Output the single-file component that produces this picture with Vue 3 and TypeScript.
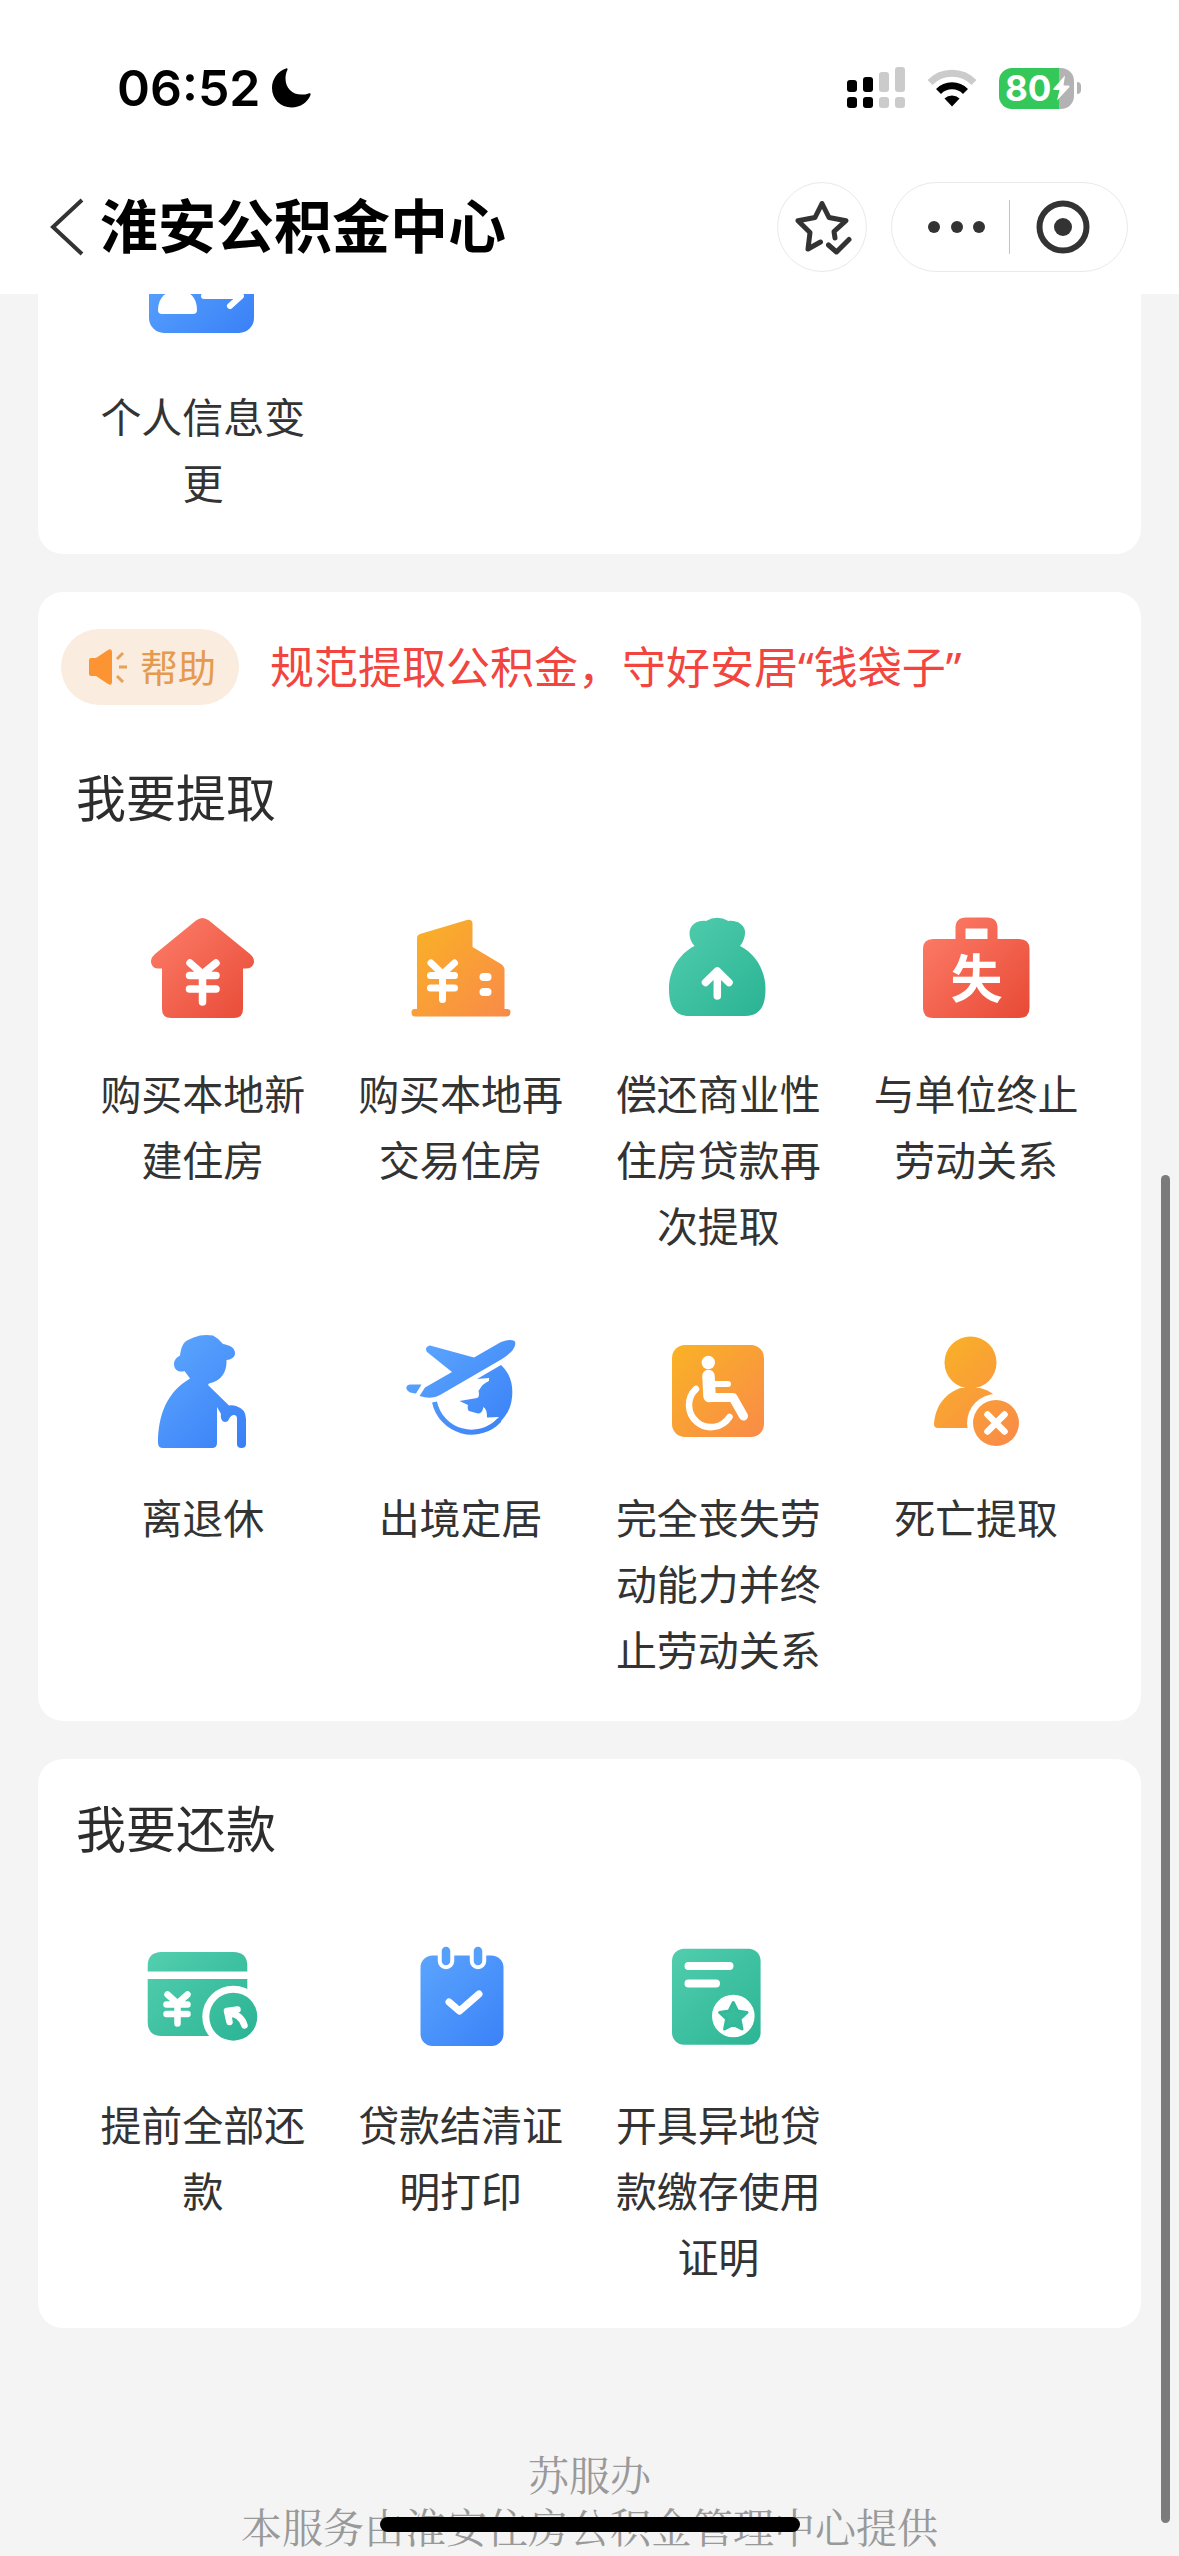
<script setup lang="ts">
type IconName =
  | 'profile' | 'house' | 'building' | 'bag' | 'briefcase' | 'elder'
  | 'plane' | 'wheelchair' | 'person' | 'repay' | 'calendar' | 'certificate'

interface Service {
  label: string
  icon: IconName
}

interface Section {
  id: string
  title?: string
  notice?: string
  items: Service[]
}

const sections: Section[] = [
  {
    id: 'info',
    items: [{ label: '个人信息变更', icon: 'profile' }],
  },
  {
    id: 'withdraw',
    title: '我要提取',
    notice: '规范提取公积金，守好安居“钱袋子”',
    items: [
      { label: '购买本地新建住房', icon: 'house' },
      { label: '购买本地再交易住房', icon: 'building' },
      { label: '偿还商业性住房贷款再次提取', icon: 'bag' },
      { label: '与单位终止劳动关系', icon: 'briefcase' },
      { label: '离退休', icon: 'elder' },
      { label: '出境定居', icon: 'plane' },
      { label: '完全丧失劳动能力并终止劳动关系', icon: 'wheelchair' },
      { label: '死亡提取', icon: 'person' },
    ],
  },
  {
    id: 'repay',
    title: '我要还款',
    items: [
      { label: '提前全部还款', icon: 'repay' },
      { label: '贷款结清证明打印', icon: 'calendar' },
      { label: '开具异地贷款缴存使用证明', icon: 'certificate' },
    ],
  },
]

const gradients = [
  { id: 'g-red', from: '#fc7b66', to: '#e94d39' },
  { id: 'g-orange', from: '#f9b226', to: '#f98b48' },
  { id: 'g-green', from: '#50cdad', to: '#2bb494' },
  { id: 'g-blue', from: '#5ca6fe', to: '#3a81f7' },
]
</script>

<template>
  <div class="page">
    <svg class="defs" aria-hidden="true">
      <defs>
        <linearGradient
          v-for="g in gradients"
          :id="g.id"
          :key="g.id"
          gradientUnits="userSpaceOnUse"
          x1="12" y1="12" x2="102" y2="102"
        >
          <stop offset="0" :stop-color="g.from" />
          <stop offset="1" :stop-color="g.to" />
        </linearGradient>
      </defs>
    </svg>

    <header class="header">
      <div class="status">
        <div class="clock">
          <time>06:52</time>
          <svg width="40" height="40" viewBox="0 0 40 40" aria-hidden="true">
            <path d="M15 0.5C6.500 3.500 1 11 1 20C1 31 9.500 39.500 20.500 39.500C29.500 39.500 36.500 34.500 39.500 27C40 25.500 39 24.800 37.500 25.400C35.500 26.200 33 26.600 30.500 26.600C21 26.600 14.500 20 14.500 10.500C14.500 7.500 15.200 4.500 16.300 2.300C17 0.900 16.300 0 15 0.500Z" />
          </svg>
        </div>
        <div class="indicators">
          <svg width="58" height="42" viewBox="0 0 58 42" aria-hidden="true">
            <rect x="0" y="13" width="10" height="12" rx="3" />
            <rect x="16" y="10" width="10" height="15" rx="3" />
            <rect x="0" y="30" width="10" height="11" rx="3" />
            <rect x="16" y="30" width="10" height="11" rx="3" />
            <g fill="#cbcbcb">
              <rect x="32" y="5" width="10" height="20" rx="3" />
              <rect x="48" y="0" width="10" height="25" rx="3" />
              <rect x="32" y="30" width="10" height="11" rx="3" />
              <rect x="48" y="30" width="10" height="11" rx="3" />
            </g>
          </svg>
          <svg width="50" height="38" viewBox="0 0 50 38" aria-hidden="true">
            <path d="M3 13.500A31 31 0 0 1 47 13.500" fill="none" stroke="#cbcbcb" stroke-width="7" />
            <path d="M11.500 22.500A19 19 0 0 1 38.500 22.500" fill="none" stroke="#000" stroke-width="7" />
            <path d="M17.500 29.500A11 11 0 0 1 32.500 29.500L25 37.500Z" />
          </svg>
          <div class="battery">
            <span class="battery-body">
              <span class="battery-text">80</span>
              <svg width="17" height="26" viewBox="0 0 17 26" aria-hidden="true">
                <path d="M12 0.500L0.500 13.500Q0 15 1.500 15H6.500L4 25.500L16.500 12Q17 10.500 15.500 10.500H10.500Z" fill="#fff" />
              </svg>
            </span>
            <span class="battery-cap"></span>
          </div>
        </div>
      </div>

      <nav class="nav">
        <button class="back" type="button" aria-label="返回">
          <svg width="34" height="58" viewBox="0 0 34 58" aria-hidden="true">
            <path d="M32 2L3 29L32 56" fill="none" stroke="#333" stroke-width="4" />
          </svg>
        </button>
        <h1>淮安公积金中心</h1>
        <button class="favorite" type="button" aria-label="收藏">
          <svg width="60" height="60" viewBox="-2 -2 60 60" aria-hidden="true">
            <g fill="none" stroke="#333" stroke-width="5" stroke-linecap="round" stroke-linejoin="round">
              <path d="M41 39L40 32.500L52 21.700L35 18.500L28 4.500L21 18.500L4 21.700L16 33.500L14 50L26.500 43" />
              <path d="M34.500 46L42.500 53L55 40.500" />
            </g>
          </svg>
        </button>
        <div class="capsule">
          <button class="more" type="button" aria-label="更多">
            <svg width="58" height="12" viewBox="0 0 58 12" aria-hidden="true">
              <g fill="#333">
                <circle cx="6" cy="6" r="6" />
                <circle cx="29" cy="6" r="6" />
                <circle cx="51" cy="6" r="6" />
              </g>
            </svg>
          </button>
          <span class="divider"></span>
          <button class="close" type="button" aria-label="关闭">
            <svg width="54" height="54" viewBox="0 0 54 54" aria-hidden="true">
              <circle cx="27" cy="27" r="23.500" fill="none" stroke="#333" stroke-width="6" />
              <circle cx="27" cy="27" r="9" fill="#333" />
            </svg>
          </button>
        </div>
      </nav>
    </header>

    <main class="content">
      <section v-for="section in sections" :key="section.id" class="card">
        <div v-if="section.notice" class="notice">
          <a class="help" href="#help">
            <svg width="40" height="36" viewBox="0 0 40 36" aria-hidden="true">
              <path d="M1 11Q1 9 3 9H8L20 1Q24 -1 24 3V33Q24 37 20 35L8 27H3Q1 27 1 25Z" fill="#fc9433" />
              <path d="M29 10L35 4M31 18H39M29 27L35 33" stroke="#e9a057" stroke-width="3" />
            </svg>
            <span>帮助</span>
          </a>
          <a class="notice-text" href="#notice">{{ section.notice }}</a>
        </div>
        <h2 v-if="section.title">{{ section.title }}</h2>
        <div class="grid">
          <button v-for="item in section.items" :key="item.label" class="item" type="button">
            <svg class="icon" viewBox="0 0 114 114" aria-hidden="true">
              <template v-if="item.icon === 'profile'">
                <rect x="3" y="14" width="105" height="85" rx="15" fill="url(#g-blue)" />
                <circle cx="32" cy="44" r="12" fill="#fff" />
                <path d="M12 76C12 64 20 56 32 56S51 64 51 76Q51 80 47 80H16Q12 80 12 76Z" fill="#fff" />
                <path d="M58 62H95L84 72" fill="none" stroke="#fff" stroke-width="6" stroke-linecap="round" stroke-linejoin="round" />
                <path d="M95 47H58L68 38" fill="none" stroke="#fff" stroke-width="6" stroke-linecap="round" stroke-linejoin="round" />
              </template>

              <template v-else-if="item.icon === 'house'">
                <path d="M50 9.500Q56.500 4.500 63 9.500L104 43Q109.500 48 107.500 53Q105.500 57.500 100 57.500H97V98Q97 107 88 107H25Q16 107 16 98V57.500H12.500Q7 57.500 5.500 53Q3.500 48 9 43Z" fill="url(#g-red)" />
                <path d="M44 52L56.500 63L70 52M43.500 64.500H70M43.500 78H70M56.500 63V91" fill="none" stroke="#fff" stroke-width="7.500" stroke-linecap="round" />
              </template>

              <template v-else-if="item.icon === 'building'">
                <path d="M13 27Q13 24 16 23L63 9Q68.500 8 68.500 13V36L97 53Q100.500 55.500 100.500 59V98H103Q106.500 98 106.500 101.500T103 105.500H11Q7.500 105.500 7.500 101.500T11 98H13Z" fill="url(#g-orange)" />
                <path d="M27 52L38.500 63L50.500 52M26.500 64.500H50.500M26.500 77H50.500M38.500 63V88.500" fill="none" stroke="#fff" stroke-width="7" stroke-linecap="round" />
                <rect x="75.500" y="62" width="12" height="8" rx="4" fill="#fff" />
                <rect x="75.500" y="77" width="12" height="8" rx="4" fill="#fff" />
              </template>

              <template v-else-if="item.icon === 'bag'">
                <path d="M33.500 35C29 30 28 24 28.700 20C30 13 37 9 45 10Q56 3.500 67.500 10C75 9 83 13 84 20C84.500 25 82.500 31 79 35C95 43 104.500 60 104.500 78C104.500 95 99 105 84 105H28.500C13.500 105 8 95 8 78C8 60 17.500 43 33.500 35Z" fill="url(#g-green)" />
                <path d="M56.300 85V60M44.500 71.500L56.300 60L68 71.500" fill="none" stroke="#fff" stroke-width="7.500" stroke-linecap="round" stroke-linejoin="round" />
              </template>

              <template v-else-if="item.icon === 'briefcase'">
                <path d="M36.500 28V17Q36.500 6.500 47 6.500H68Q78.500 6.500 78.500 17V28H100Q110.500 28 110.500 38V97Q110.500 107 100 107H14Q4 107 4 97V38Q4 28 14 28ZM46.500 17.500V28H68.500V17.500Z" fill="url(#g-red)" fill-rule="evenodd" />
                <text x="57.500" y="87" text-anchor="middle" font-size="52" font-weight="700" fill="#fff">失</text>
              </template>

              <template v-else-if="item.icon === 'elder'">
                <path d="M54 0.500Q60 -0.500 67 0.500Q72 3 77 9C84 10 89 13 89 18C89 22 86 24.500 80.500 25C81 36 76 46 63 48.500L62 50L83 70.500Q87 70 90 71Q100 74 100 84V109Q100 113 95.500 113T91 109V84Q91 80 88 80Q85 80 83 84Q82 87 79 87Q74 86 75 79L71 72V108Q71 113 66 113H17Q12 113 12 108C12 80 21 57 44 43.500L38.500 36C33 38 28 35 28 29C28 25 31 22 34 20.500C35 13 37 7 42 5Q47 2 54 0.500Z" fill="url(#g-blue)" />
              </template>

              <template v-else-if="item.icon === 'plane'">
                <path d="M30.500 67A38 38 0 0 0 95.500 85" fill="none" stroke="url(#g-blue)" stroke-width="5" />
                <path d="M97 30C107 39 110 52 107.500 66C106 75 101 83 93 90Q83 99 67 99L68 95Q85 95 95 82L83 82.500Q83 74 79.500 72Q78 79 74 78.500L65 76Q63 74 64 70L55.500 66L73 63Q76 62 74.500 56Q79 48 85 46V43L73 44Z" fill="url(#g-blue)" />
                <path d="M15.500 61L21 52.500L48 37L23 17Q20 12 26 10.500L70 22.500L97 7Q106 3.500 110.500 6Q113 9 108 16Q104 20 98 24L36 60Q28 65 15.500 61Z" fill="url(#g-blue)" />
                <path d="M17.500 49.500H6Q1.500 50 2.500 54Q4 58 12 58.500Z" fill="url(#g-blue)" />
              </template>

              <template v-else-if="item.icon === 'wheelchair'">
                <rect x="11" y="10" width="92" height="92" rx="13" fill="url(#g-orange)" />
                <circle cx="47.300" cy="27.500" r="6.700" fill="#fff" />
                <g fill="none" stroke="#fff" stroke-linecap="round" stroke-linejoin="round">
                  <path d="M47.500 41L48.500 61" stroke-width="12.500" />
                  <path d="M48 62.500H72L82.500 81" stroke-width="9" />
                  <path d="M50 49H67" stroke-width="6" />
                  <path d="M35 54A22 22 0 1 0 68.500 82" stroke-width="6.500" />
                </g>
              </template>

              <template v-else-if="item.icon === 'person'">
                <circle cx="51.500" cy="27.500" r="26" fill="url(#g-orange)" />
                <path d="M19 93Q15 93 15 89C16 70 28 57 42 53H61Q69 55 74 59L62 93Z" fill="url(#g-orange)" />
                <circle cx="77" cy="88" r="29" fill="#fff" />
                <circle cx="77" cy="88" r="23" fill="url(#g-orange)" />
                <path d="M68.500 79.500L85.500 96.500M85.500 79.500L68.500 96.500" stroke="#fff" stroke-width="6.500" stroke-linecap="round" />
              </template>

              <template v-else-if="item.icon === 'repay'">
                <path d="M1.700 29.500V24Q1.700 10 15.700 10H87.300Q101.300 10 101.300 24V29.500ZM1.700 37H101.300V94H15.700Q1.700 94 1.700 80Z" fill="url(#g-green)" />
                <circle cx="87.300" cy="74.700" r="31" fill="#fff" />
                <circle cx="87.300" cy="74.700" r="24" fill="url(#g-green)" />
                <path d="M21.500 52.500L31.500 61.500L41.500 52.500M20.500 62.500H41.500M20.500 72H41.500M31.500 61V81.500" fill="none" stroke="#fff" stroke-width="6.500" stroke-linecap="round" />
                <path d="M83.500 80L81 69L91.500 67.500M82 70.500Q95 72 98.500 83.500" fill="none" stroke="#fff" stroke-width="6.500" stroke-linecap="round" stroke-linejoin="round" />
                <path d="M79 67L93 66L87 74L84 82Z" fill="#fff" />
              </template>

              <template v-else-if="item.icon === 'calendar'">
                <rect x="16.500" y="13.500" width="83" height="90.500" rx="12" fill="url(#g-blue)" />
                <path d="M42 9V19M74 9V19" stroke="#fff" stroke-width="16.500" stroke-linecap="round" />
                <path d="M42 9V19M74 9V19" stroke="#559ffd" stroke-width="8.500" stroke-linecap="round" />
                <path d="M45 60L55.500 69L75 52" fill="none" stroke="#fff" stroke-width="7" stroke-linecap="round" stroke-linejoin="round" />
              </template>

              <template v-else>
                <rect x="11" y="6.700" width="88.600" height="96" rx="12" fill="url(#g-green)" />
                <path d="M27.500 24H68.500M27.500 41.500H55" stroke="#fff" stroke-width="8" stroke-linecap="round" />
                <circle cx="72.300" cy="74" r="21.300" fill="#fff" />
                <path d="M72.300 60.500L76.500 69L86 70.500L79 77L81 87L72.300 82.500L63.600 87L65.600 77L58.600 70.500L68.100 69Z" fill="url(#g-green)" stroke="#34ba9a" stroke-width="3" stroke-linejoin="round" />
              </template>
            </svg>
            <span class="label">{{ item.label }}</span>
          </button>
        </div>
      </section>
    </main>

    <footer class="footer">
      <p>苏服办<br>本服务由淮安住房公积金管理中心提供</p>
    </footer>

    <div class="scroll-thumb" aria-hidden="true"></div>
    <div class="home-indicator" aria-hidden="true"></div>
  </div>
</template>

<style>
body {
  margin: 0;
  background: #f4f4f4;
}
</style>

<style scoped>
.page {
  font-family: "Inter", "Noto Sans CJK SC", sans-serif;
  color: #333;
}

.defs {
  position: absolute;
  width: 0;
  height: 0;
}

svg {
  display: block;
  flex: none;
}

button {
  margin: 0;
  padding: 0;
  border: 0;
  background: none;
  color: inherit;
  font: inherit;
}

a {
  color: inherit;
  text-decoration: none;
}

h1,
h2,
p {
  margin: 0;
}

.header {
  position: sticky;
  top: 0;
  z-index: 1;
  padding: 55px 0 22px;
  background: #fff;
}

.status {
  display: flex;
  align-items: center;
  justify-content: space-between;
  height: 66px;
  padding: 0 98px 0 117px;
  color: #000;
}

.clock {
  display: flex;
  align-items: center;
  gap: 10px;
  font-size: 50px;
  font-weight: 600;
}

.indicators {
  display: flex;
  align-items: center;
  gap: 22px;
}

.battery {
  display: flex;
  align-items: center;
  gap: 3px;
}

.battery-body {
  display: flex;
  align-items: center;
  gap: 2px;
  box-sizing: border-box;
  width: 75px;
  height: 41px;
  padding-left: 6px;
  border-radius: 13px;
  background: linear-gradient(to right, #34c759 80%, #b3b3b3 80%);
}

.battery-text {
  color: #fff;
  font-size: 35px;
  font-weight: 700;
}

.battery-cap {
  width: 4px;
  height: 12px;
  border-radius: 0 4px 4px 0;
  background: #b3b3b3;
}

.nav {
  display: flex;
  align-items: center;
  height: 90px;
  margin-top: 61px;
  padding: 0 51px 0 50px;
}

.nav h1 {
  flex: 1;
  margin-left: 16px;
  color: #000;
  font-size: 58px;
  font-weight: 600;
  line-height: 90px;
  white-space: nowrap;
}

.favorite,
.capsule {
  display: flex;
  align-items: center;
  justify-content: center;
  box-sizing: border-box;
  height: 90px;
  border: 1px solid #e9e9e9;
  border-radius: 45px;
}

.favorite {
  width: 90px;
}

.capsule {
  width: 237px;
  margin-left: 24px;
}

.more,
.close {
  display: flex;
  flex: 1;
  align-items: center;
  justify-content: center;
  height: 88px;
}

.more {
  padding-left: 12px;
}

.close {
  padding-right: 12px;
}

.divider {
  width: 1px;
  height: 54px;
  background: #c4c4c4;
}

.content {
  display: flex;
  flex-direction: column;
  gap: 38px;
  margin-top: -98px;
  padding: 0 38px;
}

.card {
  overflow: hidden;
  border-radius: 25px;
  background: #fff;
}

.notice {
  display: flex;
  align-items: center;
  gap: 31px;
  padding: 37px 23px 23px;
  font-family: "Noto Sans", "Noto Sans CJK SC", sans-serif;
  line-height: 66px;
}

.help {
  display: flex;
  align-items: center;
  gap: 12px;
  height: 76px;
  padding: 0 23px 0 27px;
  border-radius: 38px;
  background: #faecdf;
  color: #e59a4d;
  font-size: 38px;
}

.notice-text {
  color: #f2453f;
  font-size: 44px;
}

.card h2 {
  padding: 38px 38px 41px;
  color: #2d2d2d;
  font-size: 50px;
  font-weight: 400;
  line-height: 66px;
}

.grid {
  display: grid;
  grid-template-columns: repeat(4, 1fr);
  padding: 0 36px;
}

.item {
  display: flex;
  flex-direction: column;
  align-items: center;
  justify-content: flex-start;
  gap: 37px;
  padding: 38px 14px 37px;
}

.icon {
  width: 114px;
  height: 114px;
}

.label {
  font-size: 41px;
  line-height: 66px;
}

.footer {
  padding: 120px 0 4px;
  color: #999;
  font-family: "Noto Serif CJK SC", "Noto Serif SC", serif;
  font-size: 41px;
  line-height: 52px;
  text-align: center;
}

.scroll-thumb {
  position: fixed;
  right: 9px;
  bottom: 33px;
  z-index: 2;
  width: 9px;
  height: 1348px;
  border-radius: 5px;
  background: #7b7b7b;
}

.home-indicator {
  position: fixed;
  bottom: 24px;
  left: 50%;
  z-index: 2;
  width: 420px;
  height: 15px;
  border-radius: 8px;
  background: #000;
  transform: translateX(-50%);
}
</style>
